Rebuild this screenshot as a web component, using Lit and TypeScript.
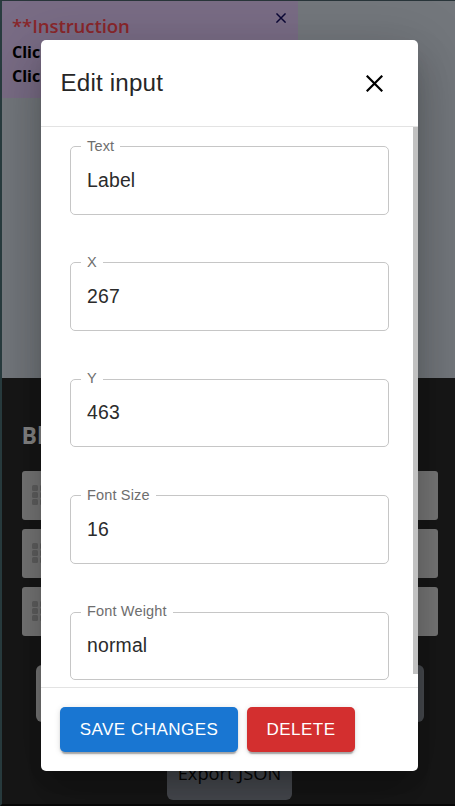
import { LitElement, html, css } from "lit";
import { customElement, property } from "lit/decorators.js";

@customElement("outlined-field")
class OutlinedField extends LitElement {
  @property() label = "";
  @property() value = "";

  static styles = css`
    :host { display: block; height: 116.4px; }
    fieldset {
      box-sizing: border-box;
      height: 76px;
      margin: 0;
      padding: 0 10px;
      min-width: 0;
      border: 1px solid #c6c6c6;
      border-radius: 5px;
    }
    legend {
      height: 16px;
      padding: 0 6px;
      font-size: 14.55px;
      line-height: 15px;
      letter-spacing: 0.136px;
      color: #6e6e6e;
    }
    .value {
      padding-left: 6px;
      font-size: 19.4px;
      line-height: 28px;
      letter-spacing: 0.18px;
      color: #2b2b2b;
      margin-top: 11px;
    }
  `;

  render() {
    return html`<fieldset>
      <legend>${this.label}</legend>
      <div class="value">${this.value}</div>
    </fieldset>`;
  }
}

@customElement("app-root")
class AppRoot extends LitElement {
  private fields = [
    ["Text", "Label"],
    ["X", "267"],
    ["Y", "463"],
    ["Font Size", "16"],
    ["Font Weight", "normal"],
  ];

  static styles = css`
    :host {
      display: block;
      position: relative;
      width: 455px;
      height: 806px;
      overflow: hidden;
      font-family: "Liberation Sans", Arial, sans-serif;
    }
    .page {
      box-sizing: border-box;
      height: 806px;
      border-left: 2px solid #293c3f;
      border-top: 1px solid #29353a;
      border-bottom: 2px solid #090909;
      background: #171717;
      font-family: "Open Sans", "Noto Sans", sans-serif;
    }
    .canvas { height: 377px; background: #73777c; }
    .note {
      box-sizing: border-box;
      width: 296px;
      height: 97px;
      padding: 13px 10px 0;
      background: #796c85;
      position: relative;
      font-weight: 700;
      font-size: 16px;
      line-height: 24px;
      color: #000;
    }
    .note h2 { margin: 0 0 2px; font-size: 18.6px; font-weight: 600; line-height: 24px; letter-spacing: -0.1px; color: #8a272b; }
    .note svg { position: absolute; left: 274px; top: 12px; }
    .panel { padding: 41px 15.5px 0 19.5px; height: 344px; box-sizing: border-box; }
    .panel h3 { margin: 0 0 19.5px; font-size: 23px; line-height: 32px; color: #858585; }
    .block {
      box-sizing: border-box;
      height: 49px;
      margin: 0 2px 9.3px 0;
      padding: 14px 10px;
      border-radius: 3px;
      background: #777;
    }
    .block svg { display: block; }
    .wide { height: 57px; margin: 29px 16px 0 14px; border-radius: 6px; background: linear-gradient(90deg, #777 50%, #484b50 50%); }
    .export {
      width: 125px;
      height: 54px;
      margin: 24px auto 0 165px;
      border-radius: 6px;
      background: #494c52;
      color: #050505;
      font-size: 18.3px;
      line-height: 54px;
      text-align: center;
      white-space: nowrap;
    }
    .dialog {
      position: absolute;
      left: 41px;
      top: 40px;
      width: 377px;
      height: 731px;
      display: flex;
      flex-direction: column;
      border-radius: 5px;
      overflow: hidden;
      background: #fff;
      box-shadow: 0 13px 18px -8px rgba(0, 0, 0, 0.2), 0 29px 46px 4px rgba(0, 0, 0, 0.14), 0 11px 56px 10px rgba(0, 0, 0, 0.12);
    }
    header {
      box-sizing: border-box;
      height: 86px;
      padding: 0 35px 0 19.5px;
      display: flex;
      align-items: center;
      justify-content: space-between;
      font-size: 24.2px;
      letter-spacing: 0.18px;
      color: #262626;
      flex: none;
    }
    .content {
      box-sizing: border-box;
      height: 562px;
      flex: none;
      display: flex;
      border-top: 1px solid #e3e3e3;
      border-bottom: 1px solid #e3e3e3;
      overflow: hidden;
    }
    .fields { width: 319px; margin-left: 29px; padding-top: 11.5px; }
    .thumb { width: 5px; height: 547px; margin-left: auto; background: #c1c1c1; }
    footer { display: flex; gap: 9px; padding: 19px; }
    button {
      height: 45px;
      padding: 0;
      border: 0;
      border-radius: 5px;
      font: 500 17px "Liberation Sans", Arial, sans-serif;
      letter-spacing: 0.48px;
      color: #fff;
      box-shadow: 0 4px 1px -2px rgba(0, 0, 0, 0.2), 0 2px 2px rgba(0, 0, 0, 0.14), 0 1px 6px rgba(0, 0, 0, 0.12);
    }
    .save { width: 178px; background: #1976d2; }
    .delete { width: 108px; background: #d32f2f; }
  `;

  private cross(size: number, color: string, width: number) {
    return html`<svg width=${size} height=${size} viewBox="0 0 16 16" stroke=${color} stroke-width=${width}>
      <path d="M.7.7 15.3 15.3M15.3.7.7 15.3" />
    </svg>`;
  }

  private grip() {
    return html`<svg width="22" height="20" fill="#606060">
      ${[0, 8, 16].map((x) => [0, 7, 14].map((y) => html`<svg x=${x} y=${y} width="6" height="6"><rect width="6" height="6" rx="1.5" /></svg>`))}
    </svg>`;
  }

  render() {
    return html`
      <div class="page">
        <div class="canvas">
          <div class="note">
            <h2>**Instruction</h2>
            <div>Click</div>
            <div>Click</div>
            ${this.cross(10, "#0b0735", 2.3)}
          </div>
        </div>
        <div class="panel">
          <h3>Blocks</h3>
          ${[0, 1, 2].map(() => html`<div class="block">${this.grip()}</div>`)}
          <div class="wide"></div>
        </div>
        <div class="export">Export JSON</div>
      </div>
      <section class="dialog">
        <header><span>Edit input</span>${this.cross(17, "#000", 2.1)}</header>
        <div class="content">
          <div class="fields">
            ${this.fields.map(([label, value]) => html`<outlined-field label=${label} value=${value}></outlined-field>`)}
          </div>
          <div class="thumb"></div>
        </div>
        <footer>
          <button class="save">SAVE CHANGES</button>
          <button class="delete">DELETE</button>
        </footer>
      </section>
    `;
  }
}
